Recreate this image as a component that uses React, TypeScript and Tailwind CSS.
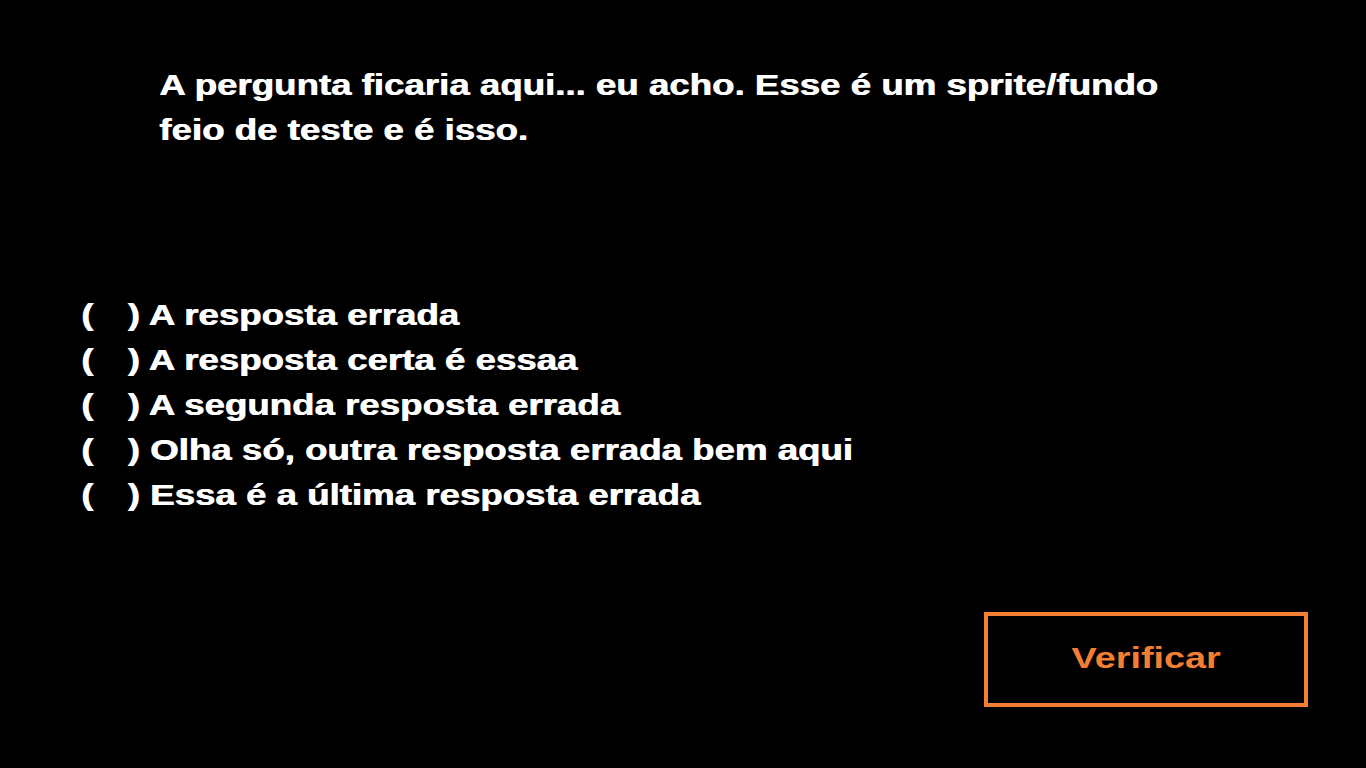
import React from 'react';

const answers = [
  'A resposta errada',
  'A resposta certa é essaa',
  'A segunda resposta errada',
  'Olha só, outra resposta errada bem aqui',
  'Essa é a última resposta errada',
];

// the sprite text is stretched horizontally, so scale it instead of spacing it
const App = () => {
  return (
    <div
      className="w-[1366px] h-[768px] bg-black text-white font-bold flex flex-col overflow-hidden [text-shadow:0.7px_0_0_currentColor]"
      style={{ fontFamily: '"Liberation Sans", Arial, sans-serif' }}
    >
      <div className="pt-[62px] pl-[159px]">
        <p className="w-[850px] text-[30px] leading-[45px] origin-left scale-x-[1.222]">
          A pergunta ficaria aqui... eu acho. Esse é um sprite/fundo feio de teste e é isso.
        </p>
      </div>
      <ul className="mt-[140px] pl-[81px] text-[30px] leading-[45px]">
        {answers.map((answer) => (
          <li key={answer} className="flex origin-left scale-x-[1.222]">
            <span className="w-[38px]">(</span>
            <span>) {answer}</span>
          </li>
        ))}
      </ul>
      <div className="flex justify-end pr-[58px] mt-[95px]">
        <button className="w-[324px] h-[95px] border-4 border-[#f47f32] text-[#f47f32] text-[30px] leading-none font-bold flex items-center justify-center pb-[3px]">
          <span className="inline-block scale-x-[1.26]">Verificar</span>
        </button>
      </div>
    </div>
  );
};

export default App;
